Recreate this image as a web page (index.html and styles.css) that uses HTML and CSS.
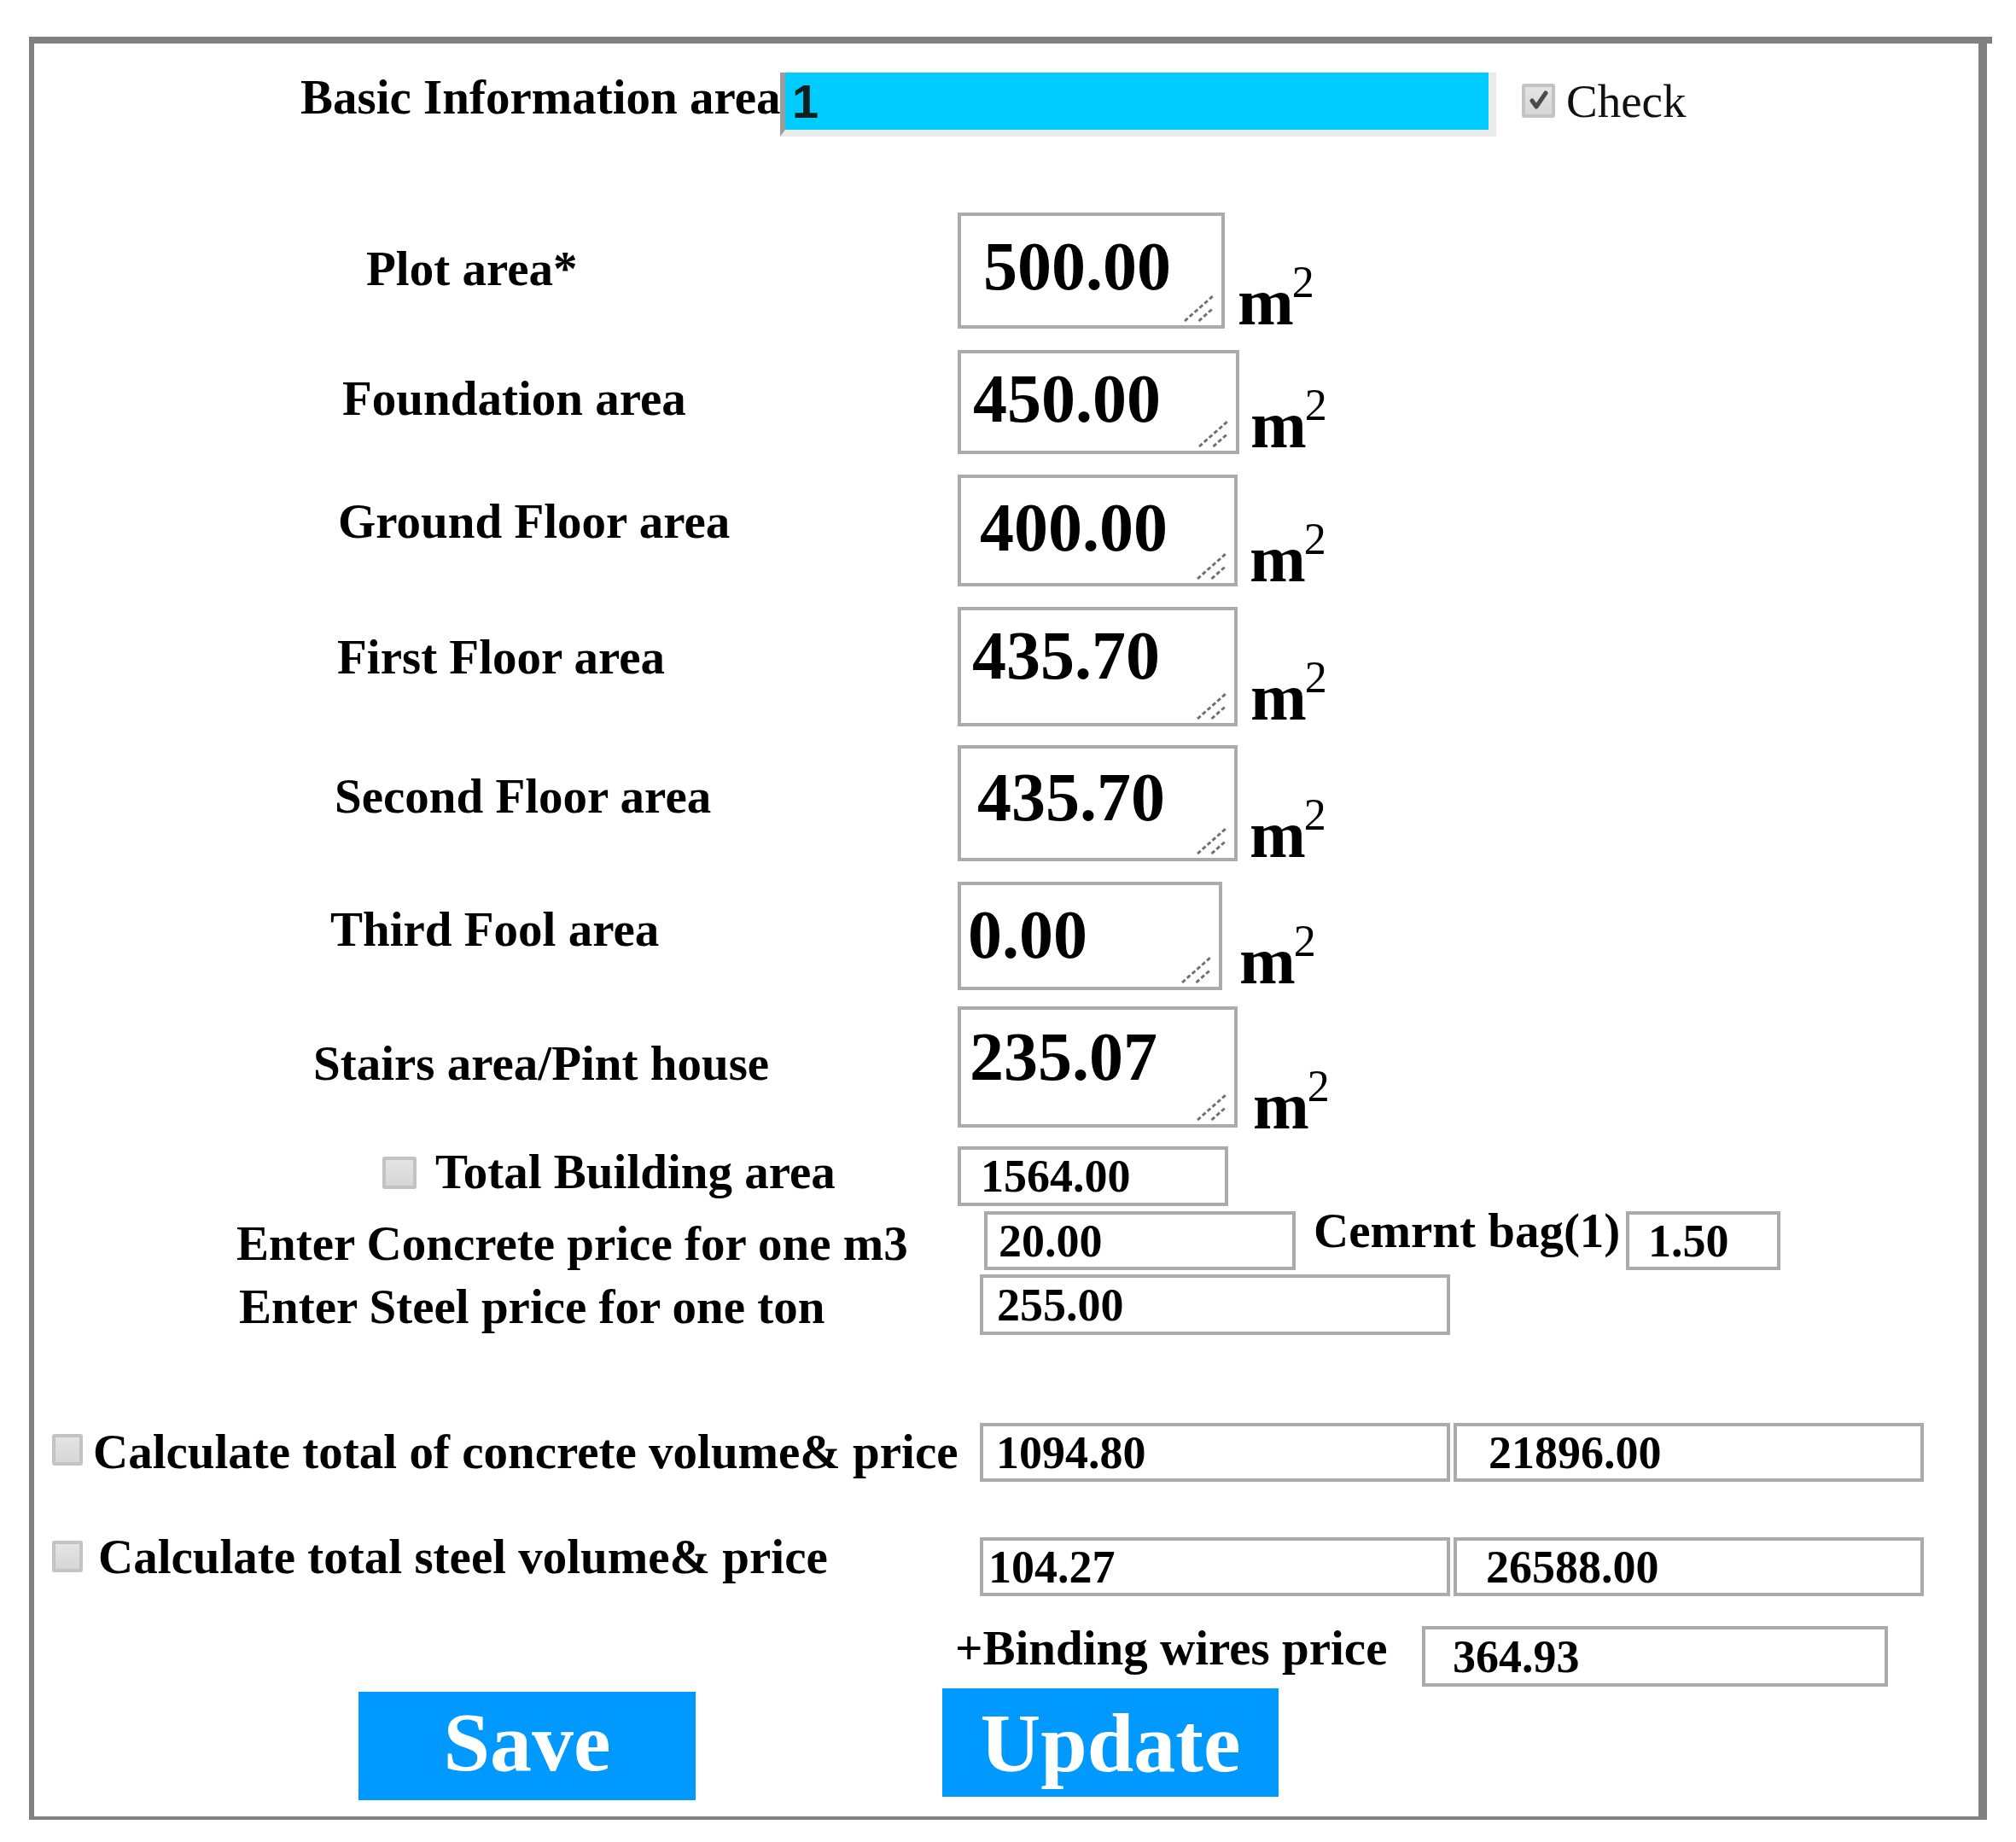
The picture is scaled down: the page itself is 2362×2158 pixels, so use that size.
FILE: index.html
```html
<!DOCTYPE html>
<html lang="en">
<head>
<meta charset="utf-8">
<title>Basic Information</title>
<link rel="stylesheet" href="styles.css">
</head>
<body>
<div class="frame">
  <div class="row header">
    <span class="lbl lbl-basic">Basic Information area</span>
    <input class="basic-input" type="text" value="1">
    <span class="cb cb-checked"><svg viewBox="0 0 30 30" width="30" height="30"><path d="M7 15 L12 22 L23 6" fill="none" stroke="#4a4a4a" stroke-width="5" stroke-linecap="round" stroke-linejoin="round"/></svg></span>
    <span class="check-text">Check</span>
  </div>

  <div class="row area r1">
    <span class="lbl">Plot area*</span>
    <div class="ta-wrap"><textarea class="ta">500.00</textarea><svg class="grip" viewBox="0 0 36 32"><path d="M1 31 L35 1 M18 31 L35 16"/></svg></div>
    <span class="unit">m<span class="sup">2</span></span>
  </div>

  <div class="row area r2">
    <span class="lbl">Foundation area</span>
    <div class="ta-wrap"><textarea class="ta">450.00</textarea><svg class="grip" viewBox="0 0 36 32"><path d="M1 31 L35 1 M18 31 L35 16"/></svg></div>
    <span class="unit">m<span class="sup">2</span></span>
  </div>

  <div class="row area r3">
    <span class="lbl">Ground Floor area</span>
    <div class="ta-wrap"><textarea class="ta">400.00</textarea><svg class="grip" viewBox="0 0 36 32"><path d="M1 31 L35 1 M18 31 L35 16"/></svg></div>
    <span class="unit">m<span class="sup">2</span></span>
  </div>

  <div class="row area r4">
    <span class="lbl">First Floor area</span>
    <div class="ta-wrap"><textarea class="ta">435.70</textarea><svg class="grip" viewBox="0 0 36 32"><path d="M1 31 L35 1 M18 31 L35 16"/></svg></div>
    <span class="unit">m<span class="sup">2</span></span>
  </div>

  <div class="row area r5">
    <span class="lbl">Second Floor area</span>
    <div class="ta-wrap"><textarea class="ta">435.70</textarea><svg class="grip" viewBox="0 0 36 32"><path d="M1 31 L35 1 M18 31 L35 16"/></svg></div>
    <span class="unit">m<span class="sup">2</span></span>
  </div>

  <div class="row area r6">
    <span class="lbl">Third Fool area</span>
    <div class="ta-wrap"><textarea class="ta">0.00</textarea><svg class="grip" viewBox="0 0 36 32"><path d="M1 31 L35 1 M18 31 L35 16"/></svg></div>
    <span class="unit">m<span class="sup">2</span></span>
  </div>

  <div class="row area r7">
    <span class="lbl">Stairs area/Pint house</span>
    <div class="ta-wrap"><textarea class="ta">235.07</textarea><svg class="grip" viewBox="0 0 36 32"><path d="M1 31 L35 1 M18 31 L35 16"/></svg></div>
    <span class="unit">m<span class="sup">2</span></span>
  </div>

  <div class="row total">
    <span class="cb cb-total"></span>
    <span class="lbl">Total Building area</span>
    <input class="fld fld-total" type="text" value="1564.00">
  </div>

  <div class="row concrete">
    <span class="lbl">Enter Concrete price for one m3</span>
    <input class="fld fld-concrete" type="text" value="20.00">
    <span class="lbl lbl-cem">Cemrnt bag(1)</span>
    <input class="fld fld-bag" type="text" value="1.50">
  </div>

  <div class="row steel">
    <span class="lbl">Enter Steel price for one ton</span>
    <input class="fld fld-steel" type="text" value="255.00">
  </div>

  <div class="row calc calc-concrete">
    <span class="cb cb-calc"></span>
    <span class="lbl">Calculate total of concrete volume&amp; price</span>
    <input class="fld fld-vol" type="text" value="1094.80">
    <input class="fld fld-price" type="text" value="21896.00">
  </div>

  <div class="row calc calc-steel">
    <span class="cb cb-calc"></span>
    <span class="lbl">Calculate total steel volume&amp; price</span>
    <input class="fld fld-vol" type="text" value="104.27">
    <input class="fld fld-price" type="text" value="26588.00">
  </div>

  <div class="row binding">
    <span class="lbl">+Binding wires price</span>
    <input class="fld fld-binding" type="text" value="364.93">
  </div>

  <div class="row buttons">
    <button class="btn btn-save" type="button">Save</button>
    <button class="btn btn-update" type="button">Update</button>
  </div>
</div>
</body>
</html>
```

FILE: styles.css
```css
html, body {
  margin: 0;
  padding: 0;
  background: #ffffff;
}

body {
  font-family: "Liberation Serif", "Times New Roman", serif;
  color: #000;
}

.frame {
  position: relative;
  box-sizing: border-box;
  width: 2294px;
  height: 2089px;
  margin: 43px 0 0 34px;
  border-style: solid;
  border-color: #808080;
  border-width: 8px 10px 4px 6px;
  display: flex;
  flex-direction: column;
}

/* small overhang of the top border past the right edge */
.frame::after {
  content: "";
  position: absolute;
  top: -8px;
  right: -16px;
  width: 6px;
  height: 8px;
  background: #808080;
}

.row {
  display: flex;
  align-items: flex-start;
  flex: none;
}

.lbl {
  box-sizing: border-box;
  flex: none;
  font-weight: bold;
  font-size: 57px;
  line-height: 1;
  white-space: nowrap;
}

/* ---------- header ---------- */
.header {
  margin-top: 34px;
  height: 75px;
}

.lbl-basic {
  width: 562px;
  margin-left: 312px;
  margin-top: 0;
  font-size: 57px;
}

.basic-input {
  box-sizing: border-box;
  flex: none;
  width: 839px;
  height: 75px;
  margin: 0;
  padding: 0 0 0 8px;
  background: #00ccff;
  border-style: solid;
  border-width: 0 9px 8px 6px;
  border-color: #ebebeb #ebebeb #ebebeb #9c9c9c;
  font-family: "Liberation Sans", Arial, sans-serif;
  font-weight: bold;
  font-size: 56px;
  color: #0d1f1f;
  outline: none;
}

.cb {
  box-sizing: border-box;
  flex: none;
  display: flex;
  align-items: center;
  justify-content: center;
  border: 4px solid #c3c3c3;
  border-radius: 3px;
  background: linear-gradient(#e4e4e4, #d6d6d6);
}

.cb-checked {
  width: 39px;
  height: 40px;
  margin-left: 30px;
  margin-top: 13px;
}

.check-text {
  flex: none;
  margin-left: 13px;
  margin-top: 6px;
  font-family: "Liberation Serif", serif;
  font-size: 55px;
  line-height: 1;
  color: #111;
}

/* ---------- area rows ---------- */
.area .lbl {
  width: 1082px;
}

.ta-wrap {
  position: relative;
  flex: none;
  height: 100%;
}

.ta {
  box-sizing: border-box;
  display: block;
  width: 100%;
  height: 100%;
  margin: 0;
  border: 4px solid #ababab;
  background: #fff;
  font-family: "Liberation Serif", serif;
  font-weight: bold;
  font-size: 80px;
  line-height: 1;
  color: #000;
  resize: none;
  overflow: hidden;
  outline: none;
}

.grip {
  position: absolute;
  right: 13px;
  bottom: 8px;
  width: 35px;
  height: 31px;
  fill: none;
  stroke: #707070;
  stroke-width: 3;
  stroke-dasharray: 5 3;
}

.unit {
  flex: none;
  align-self: flex-end;
  font-weight: bold;
  font-size: 79px;
  line-height: 1;
  white-space: nowrap;
}

.sup {
  display: inline-block;
  margin-left: -2px;
  font-size: 52px;
  font-weight: normal;
  vertical-align: 32px;
  line-height: 1;
}

.r1 { margin-top: 89px; height: 136px; }
.r1 .lbl { padding-left: 389px; margin-top: 37px; }
.r1 .ta-wrap { width: 313px; }
.r1 .ta { padding: 19px 0 0 26px; }
.r1 .unit { margin-left: 15px; margin-bottom: -8px; }

.r2 { margin-top: 25px; height: 122px; }
.r2 .lbl { padding-left: 361px; margin-top: 28px; }
.r2 .ta-wrap { width: 330px; }
.r2 .ta { padding: 13px 0 0 14px; }
.r2 .unit { margin-left: 13px; margin-bottom: -5px; }

.r3 { margin-top: 24px; height: 131px; }
.r3 .lbl { padding-left: 356px; margin-top: 26px; }
.r3 .ta-wrap { width: 328px; }
.r3 .ta { padding: 18px 0 0 22px; }
.r3 .unit { margin-left: 14px; margin-bottom: -7px; }

.r4 { margin-top: 24px; height: 140px; }
.r4 .lbl { padding-left: 355px; margin-top: 30px; }
.r4 .ta-wrap { width: 328px; }
.r4 .ta { padding: 13px 0 0 13px; }
.r4 .unit { margin-left: 15px; margin-bottom: -5px; }

.r5 { margin-top: 22px; height: 136px; }
.r5 .lbl { padding-left: 352px; margin-top: 31px; }
.r5 .ta-wrap { width: 328px; }
.r5 .ta { padding: 17px 0 0 19px; }
.r5 .unit { margin-left: 14px; margin-bottom: -8px; }

.r6 { margin-top: 24px; height: 127px; }
.r6 .lbl { padding-left: 347px; margin-top: 27px; }
.r6 .ta-wrap { width: 310px; }
.r6 .ta { padding: 18px 0 0 8px; }
.r6 .unit { margin-left: 20px; margin-bottom: -5px; }

.r7 { margin-top: 19px; height: 142px; }
.r7 .lbl { padding-left: 327px; margin-top: 38px; }
.r7 .ta-wrap { width: 328px; }
.r7 .ta { padding: 15px 0 0 10px; }
.r7 .unit { margin-left: 18px; margin-bottom: -14px; }

/* ---------- small fields ---------- */
.fld {
  box-sizing: border-box;
  flex: none;
  margin: 0;
  border: 4px solid #ababab;
  background: #fff;
  font-family: "Liberation Serif", serif;
  font-weight: bold;
  font-size: 54px;
  color: #000;
  outline: none;
  padding-top: 0;
  padding-bottom: 0;
  padding-right: 0;
}

.total { margin-top: 22px; height: 70px; }
.cb-total {
  width: 40px;
  height: 38px;
  margin-left: 408px;
  margin-top: 12px;
}
.total .lbl {
  width: 634px;
  padding-left: 22px;
  margin-top: 1px;
}
.fld-total { width: 317px; height: 70px; padding-left: 23px; }

.concrete { margin-top: 6px; height: 69px; }
.concrete .lbl {
  width: 1113px;
  padding-left: 237px;
  margin-top: 9px;
}
.fld-concrete { width: 365px; height: 69px; padding-left: 13px; }
.concrete .lbl-cem {
  width: 366px;
  padding-left: 0;
  margin-left: 21px;
  margin-top: -6px;
}
.fld-bag { width: 181px; height: 69px; padding-left: 22px; }

.steel { margin-top: 5px; height: 71px; }
.steel .lbl {
  width: 1108px;
  padding-left: 240px;
  margin-top: 9px;
}
.fld-steel { width: 551px; height: 71px; padding-left: 16px; }

.calc { height: 69px; }
.calc-concrete { margin-top: 103px; }
.calc-steel { margin-top: 65px; }

.cb-calc {
  width: 36px;
  height: 37px;
  margin-left: 21px;
}
.calc-concrete .cb-calc { margin-top: 13px; }
.calc-steel .cb-calc { margin-top: 4px; }

.calc .lbl { width: 1051px; }
.calc-concrete .lbl { padding-left: 12px; margin-top: 5px; }
.calc-steel .lbl { padding-left: 18px; margin-top: -6px; }

.fld-vol { width: 551px; height: 69px; }
.fld-price { width: 551px; height: 69px; margin-left: 4px; }
.calc-concrete .fld-vol { padding-left: 15px; }
.calc-concrete .fld-price { padding-left: 37px; }
.calc-steel .fld-vol { padding-left: 6px; }
.calc-steel .fld-price { padding-left: 34px; }

.binding { margin-top: 35px; height: 71px; }
.binding .lbl {
  width: 1626px;
  padding-left: 1079px;
  margin-top: -3px;
}
.fld-binding { width: 546px; height: 71px; padding-left: 32px; }

/* ---------- buttons ---------- */
.buttons { margin-top: 2px; }

.btn {
  box-sizing: border-box;
  flex: none;
  display: flex;
  align-items: center;
  justify-content: center;
  height: 127px;
  margin: 0;
  padding: 0;
  border: 0;
  background: #0099ff;
  color: #fff;
  font-family: "Liberation Serif", serif;
  font-weight: bold;
  font-size: 98px;
  line-height: 1;
}

.btn-save {
  width: 395px;
  margin-left: 380px;
  margin-top: 4px;
  padding-bottom: 10px;
}

.btn-update {
  width: 394px;
  margin-left: 289px;
}
```
